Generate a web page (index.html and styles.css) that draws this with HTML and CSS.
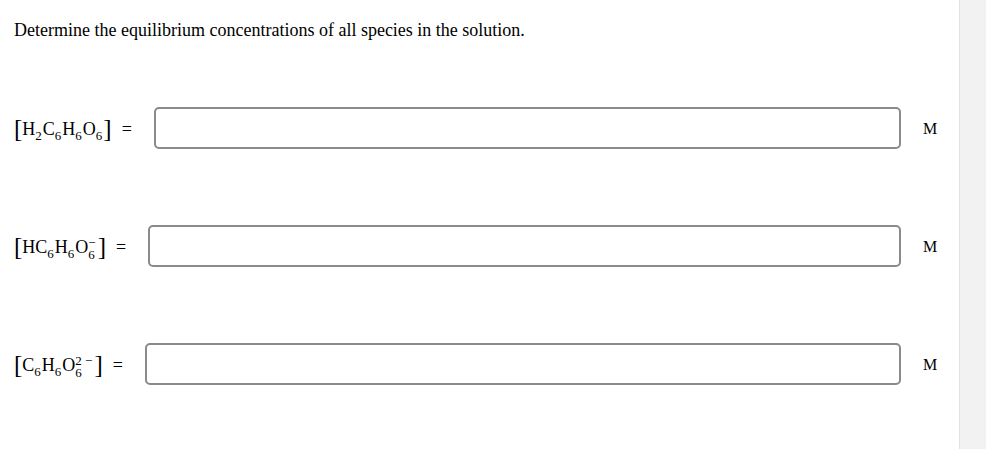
FILE: index.html
```html
<!DOCTYPE html>
<html>
<head>
<meta charset="utf-8">
<link rel="stylesheet" href="styles.css">
</head>
<body>
<div class="page">
  <main class="main">
    <p class="prompt">Determine the equilibrium concentrations of all species in the solution.</p>
    <div class="rows">
      <div class="row">
        <span class="label"><span class="br">[</span>H<sub>2</sub>C<sub>6</sub>H<sub>6</sub>O<sub>6</sub><span class="br">]</span><span class="eq">=</span></span>
        <span class="box"></span>
        <span class="unit">M</span>
      </div>
      <div class="row">
        <span class="label"><span class="br">[</span>HC<sub>6</sub>H<sub>6</sub>O<span class="ss"><span class="sp">−</span><span class="sb">6</span></span><span class="br">]</span><span class="eq">=</span></span>
        <span class="box"></span>
        <span class="unit">M</span>
      </div>
      <div class="row">
        <span class="label"><span class="br">[</span>C<sub>6</sub>H<sub>6</sub>O<span class="ss"><span class="sp">2 −</span><span class="sb">6</span></span><span class="br">]</span><span class="eq">=</span></span>
        <span class="box"></span>
        <span class="unit">M</span>
      </div>
    </div>
  </main>
  <aside class="strip"></aside>
</div>
</body>
</html>
```

FILE: styles.css
```css
html, body {
  margin: 0;
  padding: 0;
  background: #fff;
}
body {
  font-family: "Liberation Serif", "Times New Roman", serif;
  color: #000;
}
.page {
  display: flex;
  height: 449px;
}
.main {
  flex: 1;
  padding: 20px 0 0 14px;
}
.strip {
  width: 26px;
  background: #f2f2f2;
  border-left: 1px solid #e2e2e2;
}
.prompt {
  margin: 0;
  font-size: 18px;
  line-height: 20px;
}
.rows {
  margin-top: 67px;
  display: flex;
  flex-direction: column;
  gap: 76px;
}
.row {
  display: flex;
  align-items: center;
  height: 42px;
}
.label {
  display: inline-block;
  font-size: 18px;
  line-height: 26px;
  white-space: nowrap;
  padding-top: 2px;
}
.label sub {
  font-size: 13px;
  vertical-align: -5px;
  line-height: 0;
  margin-right: 1px;
}
.br {
  display: inline-block;
  font-size: 25px;
  line-height: 20px;
  vertical-align: -2px;
}
.eq {
  margin-left: 10px;
}
.ss {
  display: inline-block;
  font-size: 13px;
  line-height: 12px;
  vertical-align: -6px;
  margin-right: 2px;
}
.sp, .sb {
  display: block;
}
.box {
  flex: 1;
  margin-left: 22px;
  height: 42px;
  box-sizing: border-box;
  border: 2px solid #8a8a8a;
  border-radius: 5px;
}
.unit {
  width: 58px;
  text-align: center;
  font-size: 16px;
  padding-top: 2px;
}
```
